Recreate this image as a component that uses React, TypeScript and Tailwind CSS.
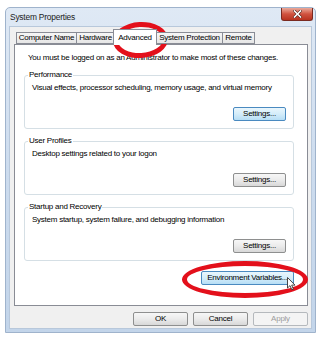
import type { ReactNode } from "react"

function Btn({
	children,
	w,
	blue,
	disabled,
}: {
	children: ReactNode
	w: string
	blue?: boolean
	disabled?: boolean
}) {
	const base =
		"h-[14px] rounded-[2px] border flex items-center justify-center text-[8px] tracking-[-0.25px] leading-none"
	if (disabled) {
		return (
			<div className={`${base} ${w} border-[#b5b9bd] bg-[#f4f4f4] text-[#9c9c9c]`}>
				{children}
			</div>
		)
	}
	if (blue) {
		return (
			<div
				className={`${base} ${w} border-[#4a8ac0] bg-gradient-to-b from-[#eaf6fd] via-[#d4edfa] to-[#b6def5] text-black`}
			>
				{children}
			</div>
		)
	}
	return (
		<div
			className={`${base} ${w} border-[#8e8f8f] bg-gradient-to-b from-[#f7f7f7] via-[#ebebeb] to-[#d8d8d8] text-black`}
		>
			{children}
		</div>
	)
}

function Grupo({
	titulo,
	texto,
	azul,
}: {
	titulo: string
	texto: string
	azul?: boolean
}) {
	return (
		<div className="relative ml-[9px] w-[270px] h-[54px] rounded-[3px] border border-[#d5dfe5] flex flex-col justify-between pt-[7px] pb-[7px] pl-[7px] pr-[7px]">
			{/* legenda sobre a borda */}
			<span className="absolute -top-[6px] left-[3px] bg-white px-[1px] text-[8px] tracking-[-0.25px] leading-[10px]">
				{titulo}
			</span>
			<div className="text-[8px] tracking-[-0.25px] leading-[10px]">{texto}</div>
			<div className="flex justify-end">
				<Btn w="w-[53px]" blue={azul}>
					Settings...
				</Btn>
			</div>
		</div>
	)
}

const abas = [
	{ nome: "Computer Name", w: "w-[60px]" },
	{ nome: "Hardware", w: "w-[38px]" },
	{ nome: "Advanced", w: "w-[44px]", ativa: true },
	{ nome: "System Protection", w: "w-[66px]" },
	{ nome: "Remote", w: "w-[33px]" },
]

export default function App() {
	return (
		<div className="relative w-[323px] h-[338px] bg-white overflow-hidden pt-[7px] pl-[5px] font-['Liberation_Sans',Arial,sans-serif] text-black">
			<div className="w-[311px] h-[326px] rounded-t-[5px] border border-[#9fb3cc] bg-gradient-to-b from-[#dfe9f5] via-[#cddcee] to-[#c3d5ea] flex flex-col">
				{/* barra de título */}
				<div className="h-[18px] flex items-start">
					<span className="pl-[4px] pt-[4px] text-[8.4px] tracking-[-0.2px] leading-[10px] text-[#1b1b1b]">
						System Properties
					</span>
					<div className="ml-auto mr-[2px] w-[32px] h-[13px] rounded-b-[3px] border border-t-0 border-[#7a2a20] bg-gradient-to-b from-[#e9a99b] via-[#d0523f] to-[#b8321f] flex items-center justify-center">
						<svg width="9" height="8" viewBox="0 0 9 8">
							<path
								d="M1.5 1 L7.5 7 M7.5 1 L1.5 7"
								stroke="#4a1a14"
								strokeWidth="2.6"
								strokeLinecap="square"
							/>
							<path
								d="M1.5 1 L7.5 7 M7.5 1 L1.5 7"
								stroke="white"
								strokeWidth="1.6"
								strokeLinecap="square"
							/>
						</svg>
					</div>
				</div>

				{/* corpo da janela */}
				<div className="mx-[3px] mb-[3px] flex-1 bg-[#f0f0f0] border border-[#b8c8db] pl-[4px] pr-[3px] flex flex-col">
					{/* abas */}
					<div className="relative z-10 mt-[2px] ml-[2px] h-[16px] -mb-[1px] flex items-end">
						{abas.map((a) =>
							a.ativa ? (
								<div
									key={a.nome}
									className={`${a.w} -mx-[1px] h-[16px] border border-b-0 border-[#898c95] bg-white flex items-center justify-center text-[8px] tracking-[-0.25px] leading-none`}
								>
									{a.nome}
								</div>
							) : (
								<div
									key={a.nome}
									className={`${a.w} h-[12px] mb-[1px] border border-r-0 last:border-r border-[#898c95] bg-gradient-to-b from-[#f6f6f6] to-[#e6e6e6] flex items-center justify-center text-[8px] tracking-[-0.25px] leading-none whitespace-nowrap`}
								>
									{a.nome}
								</div>
							),
						)}
					</div>

					{/* painel */}
					<div className="w-[294px] h-[262px] border border-[#898c95] bg-white flex flex-col">
						<div className="mt-[8px] ml-[13px] text-[8px] tracking-[-0.25px] leading-[10px]">
							You must be logged on as an Administrator to make most of these changes.
						</div>
						<div className="mt-[12px]">
							<Grupo
								titulo="Performance"
								texto="Visual effects, processor scheduling, memory usage, and virtual memory"
								azul
							/>
						</div>
						<div className="mt-[12px]">
							<Grupo titulo="User Profiles" texto="Desktop settings related to your logon" />
						</div>
						<div className="mt-[12px]">
							<Grupo
								titulo="Startup and Recovery"
								texto="System startup, system failure, and debugging information"
							/>
						</div>
						<div className="mt-[10px] flex justify-end mr-[13px]">
							<Btn w="w-[93px]" blue>
								Environment Variables...
							</Btn>
						</div>
					</div>

					{/* botões inferiores */}
					<div className="mt-[6px] flex justify-end gap-[5px] pr-[0px]">
						<Btn w="w-[55px]">OK</Btn>
						<Btn w="w-[55px]">Cancel</Btn>
						<Btn w="w-[55px]" disabled>
							Apply
						</Btn>
					</div>
				</div>
			</div>

			{/* marcações em vermelho */}
			<div className="absolute left-[113px] top-[22px] w-[55px] h-[36px] rounded-[50%] border-[5px] border-[#e3101b] -rotate-3" />
			<div className="absolute left-[182px] top-[261px] w-[126px] h-[37px] rounded-[50%] border-[5px] border-[#e3101b]" />

			{/* cursor */}
			<svg className="absolute left-[287px] top-[277px]" width="9" height="14" viewBox="0 0 9 14">
				<path
					d="M0.5 0.5 L0.5 11 L3 8.6 L4.8 12.8 L6.4 12.1 L4.7 8.1 L8 8.1 Z"
					fill="white"
					stroke="#333"
					strokeWidth="0.9"
					strokeLinejoin="round"
				/>
			</svg>
		</div>
	)
}
